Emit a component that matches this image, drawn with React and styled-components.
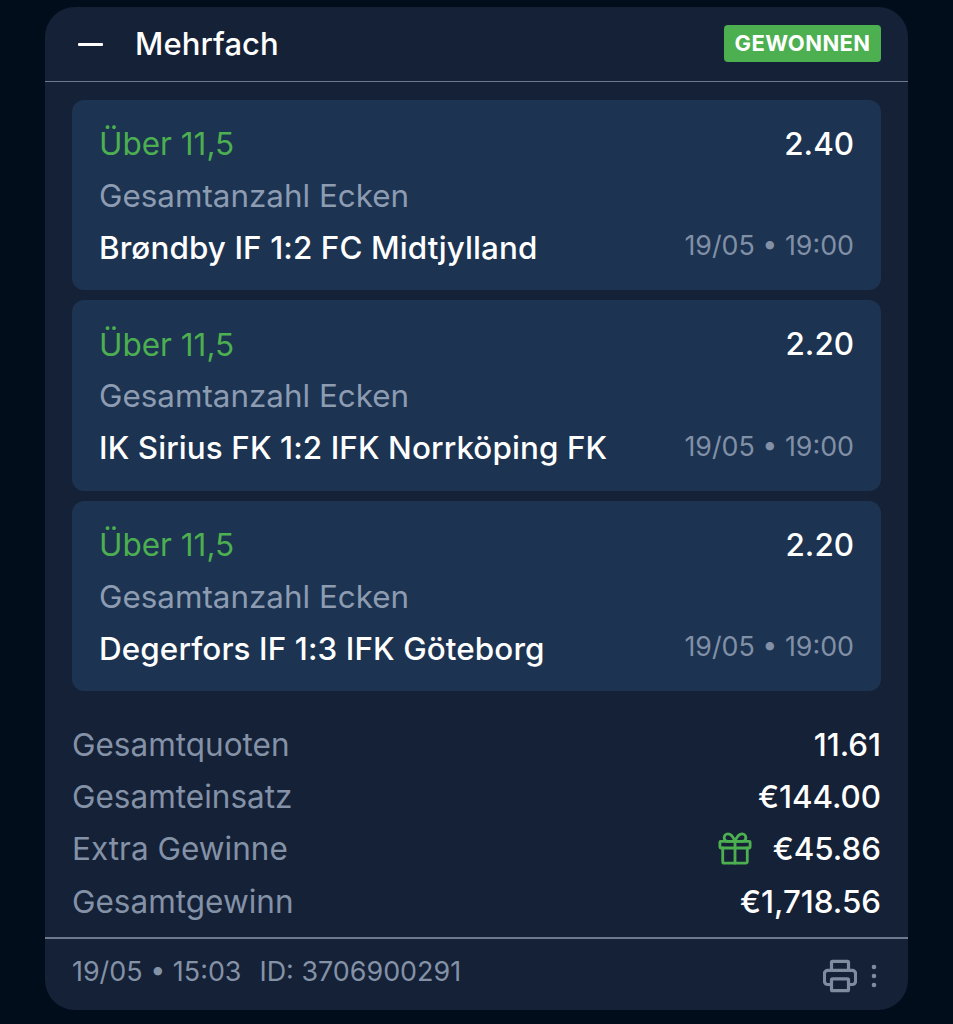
import React from "react";
import styled, { createGlobalStyle } from "styled-components";

const Global = createGlobalStyle`
  html, body { margin: 0; padding: 0; background: #020d1c; }
  body { font-family: Inter, "Liberation Sans", sans-serif; -webkit-font-smoothing: antialiased; }
`;
const Page = styled.div`
  width: 953px; height: 1024px; box-sizing: border-box; padding: 7px 45px 14px; overflow: hidden;
  background: #020d1c;
`;
const Card = styled.div`
  height: 1003px; background: #152136; border-radius: 30px; display: flex; flex-direction: column;
`;
const Header = styled.div`
  height: 75px; flex: none; box-sizing: border-box; padding: 0 27px 0 33px; display: flex; align-items: center;
  border-bottom: 1.5px solid #6d7a8d;
`;
const Minus = styled.span`
  width: 25px; height: 3px; background: #fff; border-radius: 1px; margin-right: 33px; flex: none;
`;
const Title = styled.div`
  color: #fff; font-size: 31px; font-weight: 500; letter-spacing: 0.1px; flex: 1; margin-top: -2px; margin-left: -1px;
`;
const Badge = styled.div`
  background: #4caf50; color: #fff; font-size: 22px; font-weight: 700; letter-spacing: 0.4px; height: 37px; width: 157px;
  border-radius: 4px; display: flex; align-items: center; justify-content: center; margin-top: -2px;
`;
const Legs = styled.div`
  padding: 18px 27px 0; display: flex; flex-direction: column; gap: 10.2px;
`;
const Leg = styled.div`
  background: #1c3351; border-radius: 12px; height: 190.3px; box-sizing: border-box; padding: 20.7px 27px 0;
  display: flex; flex-direction: column;
`;
const LegRow = styled.div`
  display: flex; justify-content: space-between; align-items: center; height: 46px;
`;
const Pick = styled.div` color: #4caf50; font-size: 31.5px; `;
const Odds = styled.div` color: #fff; font-size: 31.4px; font-weight: 500; `;
const Market = styled.div` color: #8d9cb1; font-size: 31.4px; height: 58px; line-height: 58px; `;
const Match = styled.div` color: #fff; font-size: 31.4px; font-weight: 500; letter-spacing: 0.1px; `;
const When = styled.div` color: #8190a6; font-size: 26.8px; margin-top: -5px; `;
const Summary = styled.div`
  padding: 27px 27px 0; display: flex; flex-direction: column; flex: 1;
`;
const SumRow = styled.div`
  display: flex; justify-content: space-between; align-items: center; height: ${p => p.$h}px;
`;
const SumLabel = styled.div` color: #8492a7; font-size: 31.5px; `;
const SumValue = styled.div`
  color: #fff; font-size: 31.3px; font-weight: 500; display: flex; align-items: center; gap: 21px; margin-top: 1px;
`;
const Footer = styled.div`
  height: 73px; flex: none; box-sizing: border-box; border-top: 2.5px solid #6d7a8d; padding: 0 31px 8px 27px;
  display: flex; align-items: center; justify-content: space-between;
`;
const Meta = styled.div`
  color: #8492a7; font-size: 26.9px; display: flex; gap: 18px;
`;
const Tools = styled.div` display: flex; align-items: center; gap: 14px; color: #7f8b9e; margin-top: 10px; `;

const Gift = () => (
  <svg width="34" height="35" viewBox="0 0 36 36" fill="none" stroke="#4caf50" strokeWidth="3" strokeLinejoin="round" strokeLinecap="round">
    <rect x="2" y="10.5" width="32" height="7" rx="1" />
    <path d="M5 17.5V32a1.5 1.5 0 0 0 1.5 1.5h23A1.5 1.5 0 0 0 31 32V17.5" />
    <path d="M18 10.5v23" />
    <path d="M18 10.5h-7.5a4 4 0 1 1 0-8c4.5 0 7.5 8 7.5 8z" />
    <path d="M18 10.5h7.5a4 4 0 1 0 0-8c-4.5 0-7.5 8-7.5 8z" />
  </svg>
);
const Printer = () => (
  <svg width="34" height="34" viewBox="0 0 36 36" fill="none" stroke="currentColor" strokeWidth="3.4" strokeLinejoin="round">
    <path d="M9 12V3.5a1 1 0 0 1 1-1h16a1 1 0 0 1 1 1V12" />
    <path d="M9 27H5a3.5 3.5 0 0 1-3.5-3.5v-8A3.5 3.5 0 0 1 5 12h26a3.5 3.5 0 0 1 3.5 3.5v8A3.5 3.5 0 0 1 31 27h-4" />
    <rect x="9" y="21" width="18" height="12.5" rx="1" />
  </svg>
);
const Dots = () => (
  <svg width="6" height="24" viewBox="0 0 6 24" fill="currentColor">
    <circle cx="3" cy="3" r="2.3" /><circle cx="3" cy="12" r="2.3" /><circle cx="3" cy="21" r="2.3" />
  </svg>
);

const legs = [
  { odds: "2.40", match: "Brøndby IF 1:2 FC Midtjylland" },
  { odds: "2.20", match: "IK Sirius FK 1:2 IFK Norrköping FK" },
  { odds: "2.20", match: "Degerfors IF 1:3 IFK Göteborg" },
];

export default function App() {
  return (
    <Page>
      <Global />
      <Card>
        <Header>
          <Minus />
          <Title>Mehrfach</Title>
          <Badge>GEWONNEN</Badge>
        </Header>
        <Legs>
          {legs.map((l, i) => (
            <Leg key={i}>
              <LegRow><Pick>Über 11,5</Pick><Odds>{l.odds}</Odds></LegRow>
              <Market>Gesamtanzahl Ecken</Market>
              <LegRow><Match>{l.match}</Match><When>19/05 • 19:00</When></LegRow>
            </Leg>
          ))}
        </Legs>
        <Summary>
          <SumRow $h={52}><SumLabel>Gesamtquoten</SumLabel><SumValue>11.61</SumValue></SumRow>
          <SumRow $h={52}><SumLabel>Gesamteinsatz</SumLabel><SumValue>€144.00</SumValue></SumRow>
          <SumRow $h={52}><SumLabel>Extra Gewinne</SumLabel><SumValue><Gift />€45.86</SumValue></SumRow>
          <SumRow $h={54}><SumLabel>Gesamtgewinn</SumLabel><SumValue>€1,718.56</SumValue></SumRow>
        </Summary>
        <Footer>
          <Meta><span>19/05 • 15:03</span><span>ID: 3706900291</span></Meta>
          <Tools><Printer /><Dots /></Tools>
        </Footer>
      </Card>
    </Page>
  );
}
